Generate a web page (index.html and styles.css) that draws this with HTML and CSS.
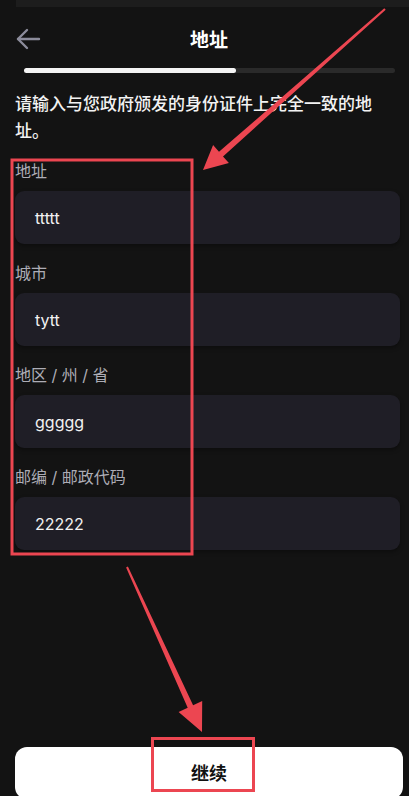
FILE: index.html
```html
<!DOCTYPE html>
<html lang="zh-CN">
<head>
<meta charset="utf-8">
<title>地址</title>
<link rel="stylesheet" href="styles.css">
</head>
<body>
<div class="page">
  <div class="top-strip"></div>
  <header class="header">
    <button class="back" aria-label="返回">
      <svg width="26" height="22" viewBox="0 0 26 22" fill="none" stroke="#8c8c9b" stroke-width="2.4" stroke-linecap="round" stroke-linejoin="round">
        <path d="M24 11H3"/>
        <path d="M12 2L3 11l9 9"/>
      </svg>
    </button>
    <h1 class="title">地址</h1>
  </header>
  <div class="progress"><div class="progress-fill"></div></div>
  <p class="desc">请输入与您政府颁发的身份证件上完全一致的地址。</p>
  <form class="fields">
    <div class="field">
      <label class="label">地址</label>
      <div class="input">ttttt</div>
    </div>
    <div class="field">
      <label class="label">城市</label>
      <div class="input">tytt</div>
    </div>
    <div class="field">
      <label class="label">地区 / 州 / 省</label>
      <div class="input">ggggg</div>
    </div>
    <div class="field">
      <label class="label">邮编 / 邮政代码</label>
      <div class="input">22222</div>
    </div>
  </form>
  <div class="footer">
    <button class="continue">继续</button>
  </div>
  <svg class="annotations" width="409" height="796" viewBox="0 0 409 796">
    <rect x="12" y="160" width="180" height="394" fill="none" stroke="#ec4651" stroke-width="3"/>
    <rect x="152.5" y="738.5" width="101" height="52" fill="none" stroke="#ec4651" stroke-width="3"/>
    <polygon fill="#ec4651" points="385.7,9.8 223,156.4 228.9,163.1 203,170 213.1,145.1 219,151.8 384.3,8.2"/>
    <polygon fill="#ec4651" points="127.9,566.6 193.1,705.3 202.2,701.1 202,732 178.6,711.9 187.7,707.7 126.1,567.4"/>
  </svg>
</div>
</body>
</html>
```

FILE: styles.css
```css
* { box-sizing: border-box; }
html, body {
  margin: 0;
  padding: 0;
  background: #131313;
}
body {
  font-family: "Inter", "Noto Sans CJK SC", sans-serif;
  color: #f2f2f2;
}
.page {
  position: relative;
  width: 409px;
  height: 796px;
  overflow: hidden;
  display: flex;
  flex-direction: column;
}
.top-strip {
  height: 7px;
  margin-left: 16px;
  background: #1d1d1d;
  flex: none;
}
.header {
  margin-top: 7px;
  height: 50px;
  display: flex;
  align-items: center;
  padding-left: 15px;
  flex: none;
}
.back {
  width: 26px;
  height: 22px;
  padding: 0;
  border: 0;
  background: none;
  display: flex;
}
.title {
  margin: 0 0 0 149px;
  font-family: "Noto Sans CJK SC", sans-serif;
  font-size: 19px;
  font-weight: 600;
  color: #ffffff;
  line-height: 24px;
}
.progress {
  margin: 4px 14px 0 24px;
  height: 5px;
  border-radius: 3px;
  background: #2a2a2a;
  flex: none;
}
.progress-fill {
  width: 212px;
  height: 100%;
  border-radius: 3px;
  background: #f4f4f4;
}
.desc {
  margin: 18px 0 0 15px;
  width: 368px;
  font-size: 17px;
  line-height: 27px;
  font-weight: 500;
  color: #f2f2f2;
}
.fields {
  margin: 16px 9px 0 15px;
  display: flex;
  flex-direction: column;
  gap: 19px;
}
.field {
  display: flex;
  flex-direction: column;
  gap: 10px;
}
.label {
  font-size: 16px;
  line-height: 20px;
  color: #adadb6;
}
.input {
  height: 53px;
  border-radius: 9px;
  background: #1f1e26;
  box-shadow: 0 2px 4px rgba(0,0,0,0.35);
  padding-left: 20px;
  display: flex;
  align-items: center;
  font-size: 16px;
  font-weight: 400;
  color: #f2f2f2;
}
.footer {
  margin-top: auto;
  padding: 0 6px 0 15px;
  margin-bottom: -3px;
}
.continue {
  width: 100%;
  height: 52px;
  border: 0;
  border-radius: 12px;
  background: #ffffff;
  color: #111111;
  font-family: "Noto Sans CJK SC", sans-serif;
  font-size: 18px;
  font-weight: 700;
  padding-bottom: 3px;
}
.annotations {
  position: absolute;
  left: 0;
  top: 0;
  pointer-events: none;
}
```
